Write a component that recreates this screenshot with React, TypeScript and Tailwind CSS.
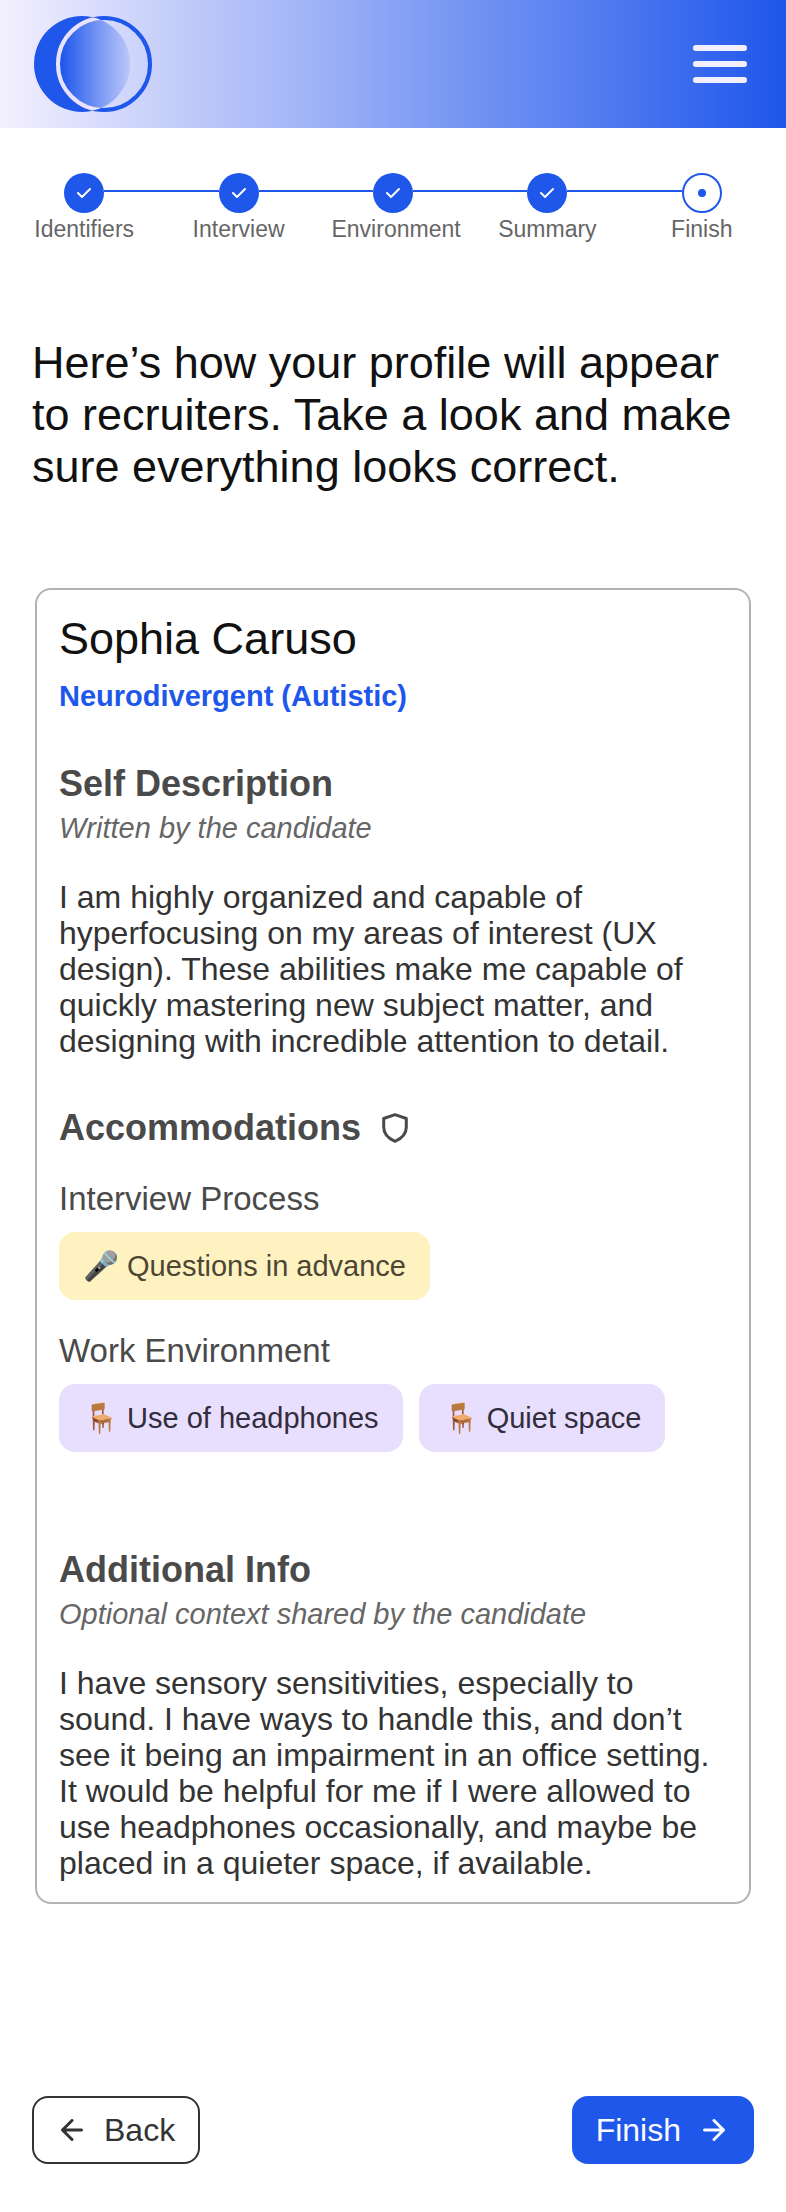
import React from "react";

const steps = [
  { label: "Identifiers", done: true },
  { label: "Interview", done: true },
  { label: "Environment", done: true },
  { label: "Summary", done: true },
  { label: "Finish", done: false },
];

function Logo() {
  return (
    <svg width="118" height="96" viewBox="0 0 118 96" fill="none" aria-hidden="true">
      <defs>
        <linearGradient id="lens" x1="28" y1="0" x2="96" y2="0" gradientUnits="userSpaceOnUse">
          <stop offset="0" stopColor="#1f57eb" />
          <stop offset="1" stopColor="#1f57eb" stopOpacity="0.12" />
        </linearGradient>
        <clipPath id="left-disc">
          <circle cx="48" cy="48" r="48" />
        </clipPath>
        <clipPath id="right-disc">
          <circle cx="70" cy="48" r="48" />
        </clipPath>
        <mask id="crescent">
          <rect width="118" height="96" fill="#fff" />
          <circle cx="70" cy="48" r="48" fill="#000" />
        </mask>
      </defs>
      <circle cx="48" cy="48" r="48" fill="#1f57eb" mask="url(#crescent)" />
      <g clipPath="url(#right-disc)">
        <circle cx="48" cy="48" r="48" fill="url(#lens)" />
      </g>
      <circle cx="70" cy="48" r="46" stroke="#1f57eb" strokeWidth="4" />
      <g clipPath="url(#left-disc)">
        <circle cx="70" cy="48" r="46" stroke="#e9e2fd" strokeWidth="4" />
      </g>
    </svg>
  );
}

function Chip({ icon, tone, children }: { icon: string; tone: string; children: React.ReactNode }) {
  return (
    <li className={`flex h-[68px] items-center rounded-2xl px-6 text-[29px] leading-[34px] ${tone}`}>
      <span className="whitespace-pre">{icon} {children}</span>
    </li>
  );
}

export default function App() {
  return (
    <div className="min-h-screen bg-white font-['Liberation_Sans',Arial,sans-serif] text-[#111111]">
      <header className="flex h-32 items-center justify-between bg-linear-to-r/srgb from-[#f3effe] to-[#1f57eb] pr-[39px] pl-[34px]">
        <a href="#" aria-label="Home">
          <Logo />
        </a>
        <button type="button" aria-label="Menu" className="flex flex-col gap-[10px]">
          <span className="h-[6px] w-[54px] rounded-full bg-[#f3f0fe]" />
          <span className="h-[6px] w-[54px] rounded-full bg-[#f3f0fe]" />
          <span className="h-[6px] w-[54px] rounded-full bg-[#f3f0fe]" />
        </button>
      </header>

      <nav aria-label="Progress" className="px-[7px] pt-[45px]">
        <ol className="grid grid-cols-5">
          {steps.map((step, i) => (
            <li key={step.label} className="flex flex-col items-center">
              <div className="flex w-full items-center">
                <span className={`-mt-1 h-[2px] flex-1 ${i === 0 ? "" : "bg-[#1f57eb]"}`} />
                {step.done ? (
                  <span className="flex size-10 items-center justify-center rounded-full bg-[#1f57eb]">
                    <svg width="16" height="12" viewBox="0 0 16 12" fill="none" stroke="#fff" strokeWidth="2" strokeLinecap="round" strokeLinejoin="round" aria-hidden="true">
                      <path d="M2 6l4 4 8-8" />
                    </svg>
                  </span>
                ) : (
                  <span className="flex size-10 items-center justify-center rounded-full border-2 border-[#1f57eb] bg-white">
                    <span className="size-2 rounded-full bg-[#1f57eb]" />
                  </span>
                )}
                <span className={`-mt-1 h-[2px] flex-1 ${i === steps.length - 1 ? "" : "bg-[#1f57eb]"}`} />
              </div>
              <span className="mt-[2px] w-[123px] text-center text-[23px] leading-7 whitespace-nowrap text-[#666666]">{step.label}</span>
            </li>
          ))}
        </ol>
      </nav>

      <main className="px-8 pb-12">
        <h1 className="mt-[94px] text-[45px] leading-[52px]">
          Here’s how your profile will appear to recruiters. Take a look and make sure everything looks correct.
        </h1>

        <article className="mx-[3px] mt-[95px] rounded-2xl border-2 border-[#b3b3b3] px-[22px] pt-[23px] pb-[21px]">
          <h2 className="text-[45px] leading-[52px]">Sophia Caruso</h2>
          <p className="mt-[14px] text-[29px] leading-[34px] font-bold text-[#1f57eb]">Neurodivergent (Autistic)</p>

          <section className="mt-[50px]">
            <h3 className="text-[36px] leading-[42px] font-bold text-[#4a4a4a]">Self Description</h3>
            <p className="mt-[6px] text-[29px] leading-[34px] text-[#666666] italic">Written by the candidate</p>
            <p className="mt-[34px] text-[32px] leading-9 text-[#333333]">
              I am highly organized and capable of hyperfocusing on my areas of interest (UX design). These abilities make me capable of quickly mastering new subject matter, and designing with incredible attention to detail.
            </p>
          </section>

          <section className="mt-[48px]">
            <div className="flex items-center gap-[21px]">
              <h3 className="text-[36px] leading-[42px] font-bold text-[#4a4a4a]">Accommodations</h3>
              <svg width="26" height="30" viewBox="0 0 26 30" fill="none" stroke="#4a4a4a" strokeWidth="3" strokeLinejoin="round" aria-hidden="true">
                <path d="M13 1.700 24.300 5.500V14C24.300 21.500 18.500 26 13 28.300C7.500 26 1.700 21.500 1.700 14V5.500Z" />
              </svg>
            </div>
            <h4 className="mt-[31px] text-[33px] leading-[38px] text-[#4a4a4a]">Interview Process</h4>
            <ul className="mt-[14px] flex flex-wrap gap-4">
              <Chip icon="🎤" tone="bg-[#fef3c0] text-[#4d4635]">Questions in advance</Chip>
            </ul>
            <h4 className="mt-[32px] text-[33px] leading-[38px] text-[#4a4a4a]">Work Environment</h4>
            <ul className="mt-[14px] flex flex-wrap gap-4">
              <Chip icon="🪑" tone="bg-[#e8dffe] text-[#322d3c]">Use of headphones</Chip>
              <Chip icon="🪑" tone="bg-[#e8dffe] text-[#322d3c]">Quiet space</Chip>
            </ul>
          </section>

          <section className="mt-[97px]">
            <h3 className="text-[36px] leading-[42px] font-bold text-[#4a4a4a]">Additional Info</h3>
            <p className="mt-[6px] text-[29px] leading-[34px] text-[#666666] italic">Optional context shared by the candidate</p>
            <p className="mt-[34px] text-[32px] leading-9 text-[#333333]">
              I have sensory sensitivities, especially to sound. I have ways to handle this, and don’t see it being an impairment in an office setting. It would be helpful for me if I were allowed to use headphones occasionally, and maybe be placed in a quieter space, if available.
            </p>
          </section>
        </article>

        <div className="mt-48 flex items-center justify-between">
          <button type="button" className="flex h-[68px] items-center gap-[21px] rounded-2xl border-2 border-[#333333] bg-white pr-[23px] pl-[27px] text-[32px] leading-9 text-[#333333]">
            <svg width="22" height="22" viewBox="0 0 22 22" fill="none" stroke="currentColor" strokeWidth="3" strokeLinecap="round" strokeLinejoin="round" aria-hidden="true">
              <path d="M20.500 11H1.500M11 1.500 1.500 11 11 20.500" />
            </svg>
            Back
          </button>
          <button type="button" className="flex h-[68px] items-center gap-[22px] rounded-2xl bg-[#1f57eb] pr-[29px] pl-6 text-[32px] leading-9 text-[#fafaff]">
            Finish
            <svg width="22" height="22" viewBox="0 0 22 22" fill="none" stroke="currentColor" strokeWidth="3" strokeLinecap="round" strokeLinejoin="round" aria-hidden="true">
              <path d="M1.500 11H20.500M11 1.500 20.500 11 11 20.500" />
            </svg>
          </button>
        </div>
      </main>
    </div>
  );
}
